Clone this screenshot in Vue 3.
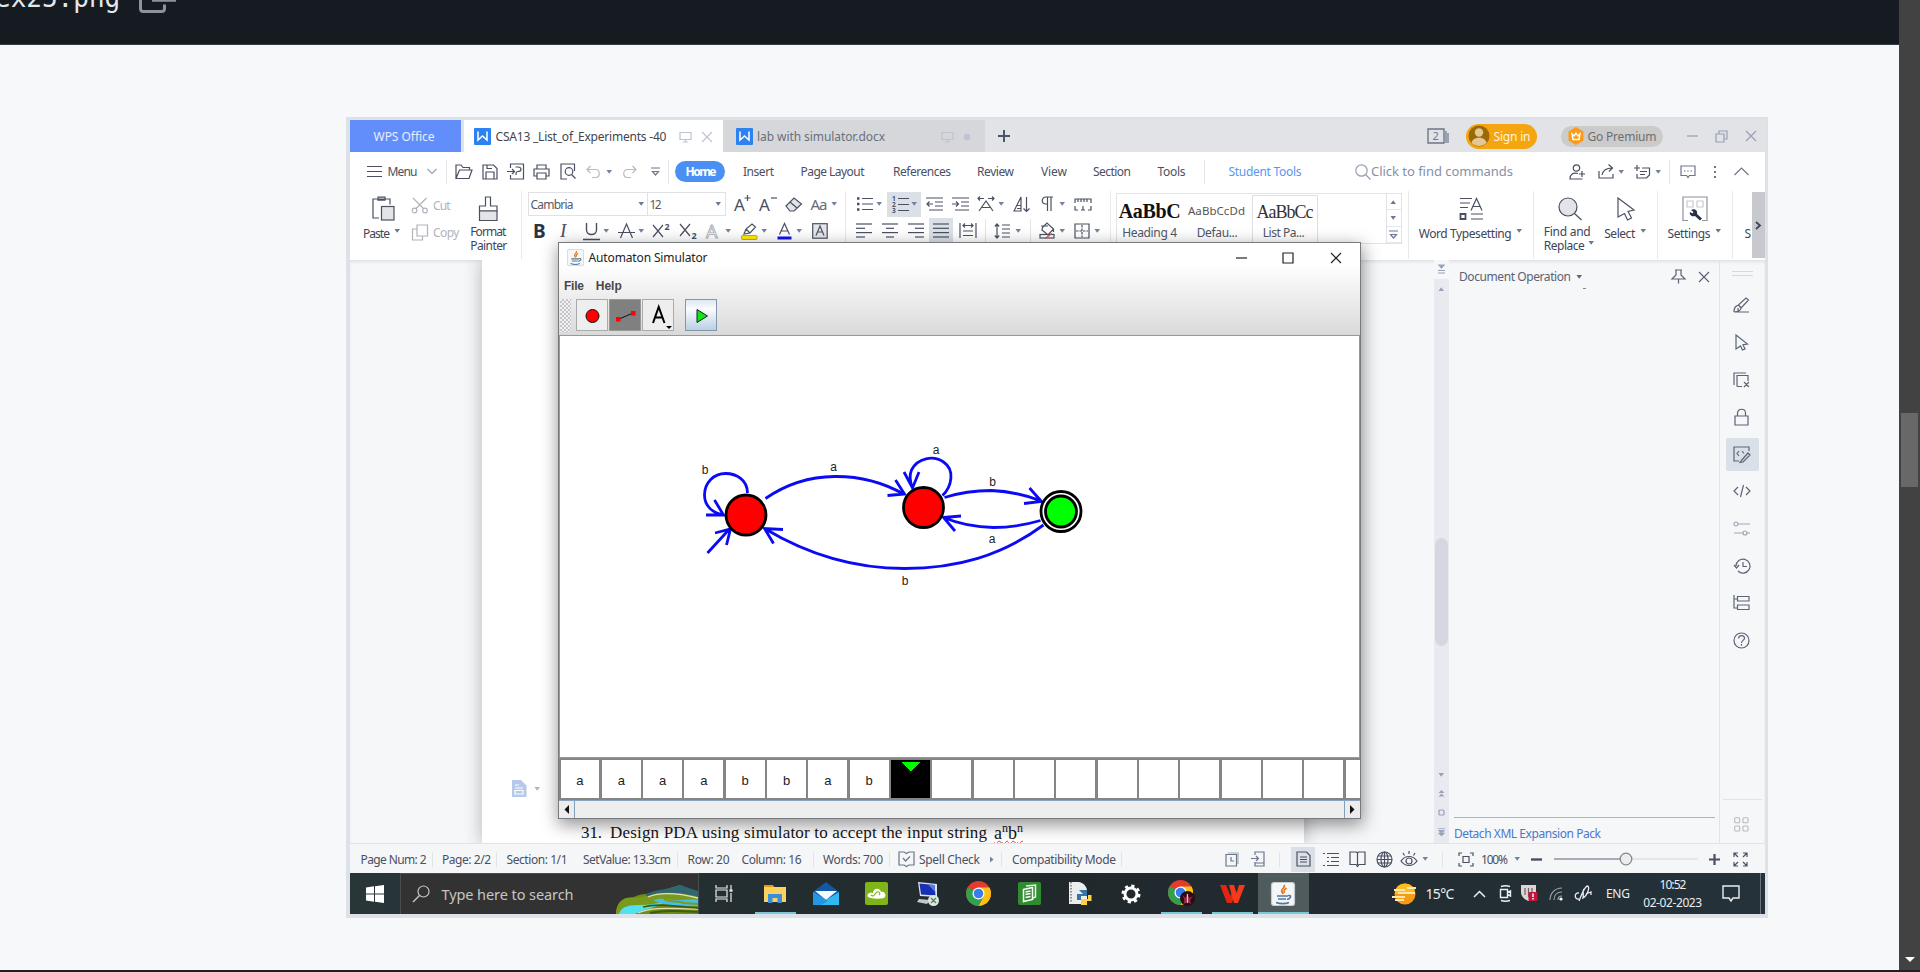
<script setup>
import { h, withDirectives } from 'vue'

// Adjusts letter spacing so that a label fills the given width.
const vFit = {
  mounted(el, { value }) {
    if (!value) return
    const range = document.createRange()
    range.selectNodeContents(el)
    const n = el.textContent.length
    const natural = range.getBoundingClientRect().width
    if (n > 1) el.style.letterSpacing = (value - natural) / (n - 1) + 'px'
  },
}

const bar = (x1, x2, y) => `<path d="M${x1} ${y}H${x2}"/>`
const java = '<rect x=".5" y=".5" width="23" height="23" rx="2.5" fill="#f4f6f7" stroke="#c3ccd1"/><g fill="none" stroke="#e5761f" stroke-width="1.7"><path d="M13 3c2 3-4 4-2 7l1 2M15.500 6c-3 2-3 3-2 5"/></g><g fill="none" stroke="#51799b" stroke-width="1.600"><path d="M6 14h11M7 17h8M5 20.500c4 1.500 10 1.500 13 0M17 13.500c4-.5 3 3-1 4"/></g>'
const chrome = '<circle cx="12.500" cy="12.500" r="12.500" fill="#e33b2e" stroke="none"/><path d="M12.500 12.500L1.700 6.300A12.500 12.500 0 0 0 12.500 25L18 15z" fill="#30a14e" stroke="none"/><path d="M12.500 25A12.500 12.500 0 0 0 23.500 6.500H12.500L18 15z" fill="#fbc116" stroke="none"/><circle cx="12.500" cy="12.500" r="6" fill="#fff" stroke="none"/><circle cx="12.500" cy="12.500" r="4.800" fill="#3b7ded" stroke="none"/>'
const wlogo = '<rect width="17" height="17" rx="1" fill="#2c82f0" stroke="none"/><path d="M4 3.500v8.500L8.500 8l4.500 4V3.500" stroke="#fff" stroke-width="1.500"/>'

const icons = {
  wlogo: [17, 17, wlogo],
  monitor: [13, 12, '<path d="M1 1.500h11v7H1zM6.500 8.500v2.500M4 11h5"/>'],
  x: [12, 12, '<path d="M1 1l10 10M11 1L1 11"/>'],
  dot: [8, 8, '<circle cx="4" cy="4" r="3.200" fill="currentColor" stroke="none"/>'],
  plusBig: [14, 14, '<path d="M7 1v12M1 7h12" stroke-width="2"/>'],
  count: [22, 17, '<path d="M1 1h16v14H1z" stroke-width="1.400"/><path d="M19 3v12M21 5v10"/><text x="5.500" y="12" font-size="11">2</text>'],
  avatar: [22, 22, '<circle cx="11" cy="11" r="10.500" fill="#9c6a05" stroke="none"/><circle cx="11" cy="7.500" r="4.200" fill="#e4c795" stroke="none"/><path d="M3.500 18c1-7 14-7 15 0-4 4-11 4-15 0z" fill="#e4c795" stroke="none"/>'],
  crown: [16, 18, '<path d="M8 0l7.500 4.500v9L8 18 .5 13.500v-9z" fill="#fb9b16" stroke="none"/><path d="M4 7l1 5.500h6L12 7 9.800 9 8 6 6.200 9z" stroke="#fff" stroke-width="1.400"/>'],
  min: [11, 12, bar(0, 11, 6)],
  restore: [13, 13, '<path d="M1 4h8v8H1zM4 4V1h8v8H9"/>'],
  square: [12, 12, '<path d="M1 1h10v10H1z"/>'],
  burger: [15, 13, '<path d="M0 1.500h15M0 6.500h15M0 11.500h15"/>'],
  chev: [10, 7, '<path d="M.5 1l4.500 4.500L9.500 1"/>'],
  chevUp: [15, 9, '<path d="M.5 8l7-7 7 7"/>'],
  chevR: [6, 9, '<path d="M1 1l4 3.500-4 3.500" stroke-width="1.800"/>'],
  open: [18, 16, '<path d="M1 14.500V1h5l2 2.500h6.500V6M1 14.500L4.500 6H17l-3 8.500z"/>'],
  save: [16, 16, '<path d="M1 1h10.500L15 4.500V15H1zM4 15V8h8v7M5 1v3.500h5"/>'],
  export: [18, 17, '<path d="M3.500 5V1H16.500v15H3.500v-4M0 8.500h7M5 6l2.500 2.500L5 11M9 12c0-3 0-3 2-3.500 4 0 4-4.500 0-4.500H8.500"/>'],
  print: [17, 16, '<path d="M4 5V1h9v4M4 12H1V5h15v7h-3M4 9h9v6H4z"/>'],
  preview: [16, 17, '<path d="M7 16H1V1h13.500v7"/><circle cx="9" cy="8.500" r="3.800"/><path d="M11.500 11.500l4 4"/>'],
  undo: [15, 14, '<path d="M4.500 1L1 4.500 4.500 8M1 4.500h8.500c5 0 5 8 0 8H6"/>'],
  redo: [15, 14, '<path d="M10.500 1L14 4.500 10.500 8M14 4.500H5.500c-5 0-5 8 0 8H9"/>'],
  more: [9, 9, '<path d="M0 1h9M1.500 4.500h6L4.500 8z"/>'],
  caret: [7, 4, '<path d="M.5 0h5.500L3.200 3.800z" fill="currentColor" stroke="none"/>'],
  caretU: [7, 4, '<path d="M.5 4h5.500L3.200 .2z" fill="currentColor" stroke="none"/>'],
  caretR: [4, 7, '<path d="M0 .5v6l3.500-3z" fill="currentColor" stroke="none"/>'],
  scrollR: [5, 9, '<path d="M0 0v9l4.500-4.500z" fill="currentColor" stroke="none"/>'],
  search: [16, 16, '<circle cx="6.500" cy="6.500" r="5.700"/><path d="M10.500 10.500l5 5"/>'],
  user: [16, 16, '<circle cx="7.500" cy="4" r="3.200"/><path d="M9 9.500c-5-1.500-8 1-8 5.500h12.500M13 7v6M10 10h6"/>'],
  share: [17, 15, '<path d="M1 7v7h14v-4M4 11c1-5 4-7 10-7M10.500 .5L14.500 4 11 7.500"/>'],
  note: [17, 14, '<path d="M3 0v6M0 3h6M8 3h7.500v7l-3 3H3V9M6 6.500h7M6 9.500h5"/>'],
  chat: [16, 14, '<path d="M1 1h14v9.500H9.500L8 12.500l-1.500-2H1z"/><path d="M4 6h1.500M7.200 6h1.500M10.500 6H12"/>'],
  dots: [4, 14, '<path d="M2 1v2M2 6v2M2 11v2" stroke-width="2"/>'],
  paste: [23, 25, '<path d="M7 21.500H1V2.500h17V8M6 .7h7v3H6z"/><rect x="9.500" y="10" width="12.500" height="13.500" fill="#e3e4e7"/>'],
  cut: [18, 17, '<circle cx="3.500" cy="13.500" r="2.300"/><circle cx="14" cy="13.500" r="2.300"/><path d="M2 1l10.500 10.500M15.500 1L5 11.500"/>'],
  copy: [17, 17, '<path d="M5.500 1h10.500v11H5.500zM5.500 5H1v11h10v-4"/>'],
  brush: [21, 26, '<path d="M7.500 10V1h5v9h6.500v5H1.500v-5z"/><path d="M1.500 15h17.500v9.500H1.500z" fill="#e3e4e7"/>'],
  Ap: [18, 18, '<text x="0" y="16" font-size="17">A</text><path d="M13.500 0v6M10.500 3h6"/>'],
  Am: [18, 18, '<text x="0" y="16" font-size="17">A</text><path d="M12 3h6"/>'],
  eraser: [18, 15, '<path d="M1 9l8-8 7.500 6-7.500 7H5z" fill="#e3e4e7"/><path d="M5 5l7 6"/>'],
  bullets: [17, 16, '<path d="M6 2.500h11M6 8h11M6 13.500h11"/><path d="M1 2.500h2.500M1 8h2.500M1 13.500h2.500" stroke-width="2.500"/>'],
  numbers: [17, 17, '<path d="M6 2.500h11M6 8.500h11M6 14.500h11"/><g font-size="6.500" font-weight="700"><text x="0" y="5">1</text><text x="0" y="11">2</text><text x="0" y="17">3</text></g>'],
  outdent: [17, 14, '<path d="M0 1h17M9 5h8M9 9h8M3 13h14M7 7H1M3.500 4.500L1 7l2.500 2.500"/>'],
  indent: [17, 14, '<path d="M0 1h17M9 5h8M9 9h8M3 13h14M0 7h6M4 4.500L6.500 7 4 9.500"/>'],
  scaleA: [18, 16, '<path d="M1 2.500h6M3 .5l-2 2 2 2M11 2.500h6M15 .5l2 2-2 2M2 15L9 5l7 10M5 11.500h8"/>'],
  sort: [17, 17, '<path d="M1 15L8 1v14zM4 9.500h4M4 12.500h4M13.500 1v14M10.500 12.500l3 3 3-3"/>'],
  pilcrow: [13, 16, '<path d="M12 1H5C0 1 0 8 5 8h1M6.500 1v14M10 1v14"/>'],
  ruler: [18, 13, '<path d="M1 5V1h16v4M4 1v3M7 1v3M10 1v3M13 1v3M1 8v4h3M14 12h3V8M9 8v4M7 12h4"/>'],
  under: [17, 19, '<path d="M3.500 1v7c0 6 10 6 10 0V1M0 17.500h17" stroke-width="1.400"/>'],
  strikeA: [17, 17, '<path d="M2.500 15L8.500 1l6 14M0 9.500h17" stroke-width="1.200"/>'],
  sup: [19, 16, '<path d="M1 2l10 12M11 2L1 14"/><text x="12.500" y="7" font-size="9" font-weight="700">2</text>'],
  sub: [19, 17, '<path d="M1 1l10 12M11 1L1 13"/><text x="12.500" y="16" font-size="9" font-weight="700">2</text>'],
  outA: [15, 16, '<text class="hollow" x="0" y="15" font-size="18">A</text>'],
  hilite: [17, 17, '<rect x=".5" y="12.500" width="15.500" height="4" rx="1" fill="#ffee00" stroke="#9a9620" stroke-width=".7"/><path d="M3 11l2-5 6-5 3.500 3L9 10zM5 6l4 4"/>'],
  colorA: [15, 17, '<path d="M2.500 11.500L7.500 .5l5 11M4.200 8h6.500"/><path d="M.5 15h14" stroke="#1212f0" stroke-width="3"/>'],
  boxA: [16, 16, '<rect x=".7" y=".7" width="14.500" height="14.500" fill="#e4e6e9"/><path d="M4 12.500l4-9.500 4 9.500M5.500 9h5"/>'],
  alL: [16, 15, bar(0, 16, 1) + bar(0, 9, 5.300) + bar(0, 16, 9.600) + bar(0, 9, 14)],
  alC: [16, 15, bar(0, 16, 1) + bar(4, 12, 5.300) + bar(0, 16, 9.600) + bar(4, 12, 14)],
  alR: [16, 15, bar(0, 16, 1) + bar(7, 16, 5.300) + bar(0, 16, 9.600) + bar(7, 16, 14)],
  alJ: [16, 15, bar(0, 16, 1) + bar(0, 16, 5.300) + bar(0, 16, 9.600) + bar(0, 16, 14)],
  distrib: [18, 15, '<path d="M1 0v15M17 0v15M4 2.500h10M6 .5l-2 2 2 2M12 .5l2 2-2 2M4 8h10M4 12.500h10"/>'],
  spacing: [16, 16, '<path d="M3 1v14M.8 3.500L3 1l2.200 2.500M.8 12.500L3 15l2.200-2.500M8 2h8M8 6h8M8 10h8M8 14h8"/>'],
  fill: [17, 17, '<path d="M3.500 5.500L8 1l6.500 6-5.500 6-6-5zM2 4h7M14.500 7v3"/><rect x="1" y="12.500" width="14" height="3.500"/><path d="M6 16.500l7-5" stroke="#e25050"/>'],
  border: [16, 16, '<path d="M1 1h14v14H1z"/><path d="M8 2v12M2 8h12" stroke-dasharray="2.500 1"/>'],
  typeset: [25, 23, '<path d="M1 1h12M1 5.500h10M1 10h8M12 21.500h12M12 16.500h12M12 13l5.500-12L23 13M14 9h7" /><path d="M1.500 16.500h5v5h-5z" stroke-width="1.800"/>'],
  find: [24, 24, '<circle cx="10" cy="10" r="9" fill="#e3e4e7"/><path d="M16.500 16.500l7 6.500"/>'],
  pointer: [18, 24, '<path d="M1 1l16 12-6 1.500 3.500 6.500-4 2-3-6.500L1 20z"/>'],
  settings: [26, 26, '<path d="M6 24.500H1V1h24v23.500h-5" stroke="#8e9299"/><path d="M5 5h6v6H5zM15 5h6v6h-6z" stroke="#c7c9cd"/><path d="M9 14c4-2 7 1 6 4l5 4.500-2 2-5-4.500c-3 1-6-1-5-4l2.500 1.500 1-1.500z" fill="#263145" stroke="none"/>'],
  pin: [15, 15, '<path d="M4 1h7M5 1v5L1 10h13l-4-4V1M7.500 10v4.500"/>'],
  pen: [17, 16, '<path d="M1 15h15M1 15c0-5 2-6 4.500-7L13 1l2.500 2L8 11c0 2-3 4-7 4M5.500 8L8 11M5 11v3"/>'],
  cursor: [14, 17, '<path d="M1 1l11.500 9-4.500.7 2 4.300-2.500 1-2-4-4.500 3z"/>'],
  cards: [17, 16, '<path d="M1 13V1h12M4 14.500V3.500h11V9M4 14.500h5M11 10l5 5M16 10l-5 5"/>'],
  lock: [15, 18, '<path d="M1 8h13v9H1zM3.500 8V5c0-5 8-5 8 0v3"/>'],
  xmlpen: [18, 17, '<path d="M6 15H1V1h15v4M6 5L4 7.500 6 10M9 5l2 2.500M8 15l7-8 2 2-7 7-3 .5z"/>'],
  code: [18, 14, '<path d="M5 3L1 7l4 4M13 3l4 4-4 4M10.500 1l-3 12"/>'],
  sliders: [18, 16, '<circle cx="3" cy="3" r="2"/><path d="M5 3h12M1 12h9M14 12h3"/><circle cx="12" cy="12" r="2"/>'],
  history: [18, 16, '<path d="M3 8a7 7 0 1 1 2 5M1 7l2.500 3L6 7M10 4v4.500h4"/>'],
  tree: [17, 16, '<path d="M1 0v13h3M1 4h3M4.500 1.500H16v4.500H4.500zM4.500 10H16v4.500H4.500z"/>'],
  help: [17, 17, '<circle cx="8.500" cy="8.500" r="7.500"/><path d="M5.500 6.500c.5-4 6.500-3.500 6 0C11 8.500 8.500 8.500 8.500 11M8.500 12v1.700"/>'],
  squares: [15, 15, '<g stroke-width="1.100"><rect x=".7" y=".7" width="5" height="5" rx="1"/><rect x="9" y=".7" width="5" height="5" rx="1"/><rect x=".7" y="9" width="5" height="5" rx="1"/><rect x="9" y="9" width="5" height="5" rx="1"/></g>'],
  tiny2u: [7, 8, '<path d="M.5 4h6L3.500 1zM.5 7.500h6l-3-3z" fill="currentColor" stroke="none"/>'],
  tiny2d: [7, 8, '<path d="M0 .7h7M.5 2.500h6l-3 2.500zM.5 5h6l-3 3z" fill="currentColor" stroke-width=".8"/>'],
  tinySq: [7, 7, '<rect x="1" y="1" width="5" height="5" rx="1"/>'],
  splitter: [9, 9, '<path d="M2 0h5L4.500 3zM1 5.500h7M1 8h7" fill="currentColor"/>'],
  docTag: [15, 17, '<path d="M0 0h9l5.500 5.500V17H0z" fill="#b7c9e8" stroke="none"/><path d="M3 5h4M3 8h8M3 10.500h8v3.500H3z" stroke="#fff"/>'],
  spell: [17, 16, '<path d="M1 1h5l2.500 1.500L11 1h5v13h-5l-2.500 1.500L6 14H1z"/><path d="M5 7l2.500 3L12 5.500"/>'],
  clock: [14, 15, '<path d="M3 1h10v11" stroke="#a7abb5"/><path d="M1 2.500h10.500v11.500H1z"/><path d="M6 5v4h3"/>'],
  phone: [14, 16, '<path d="M4 4V1h9v14H4v-4M0 7.500h7M5 5l2.500 2.500L5 10M4 12h9"/>'],
  doc: [15, 16, '<path d="M1 1h9.500L14 4.500V15H1zM4 6h7M4 8.500h7M4 11h7"/>'],
  outline: [16, 15, '<path d="M0 1.500h2M4 1.500h12M4 5.500h2M8 5.500h8M4 9.500h2M8 9.500h8M0 13.500h2M4 13.500h12"/>'],
  book: [17, 16, '<path d="M1 1h6.500l1 1 1-1H16v12.500H10l-1.500 2-1.500-2H1zM8.500 2v12"/>'],
  globe: [17, 17, '<circle cx="8.500" cy="8.500" r="7.500"/><ellipse cx="8.500" cy="8.500" rx="3.500" ry="7.500"/><path d="M8.500 1v15M1 8.500h15M2 5h13M2 12h13"/>'],
  eye: [18, 16, '<path d="M1 10c4-6 12-6 16 0-4 6-12 6-16 0zM9 0v3M3 2l1.500 2.500M15 2l-1.500 2.500"/><circle cx="9" cy="10" r="3"/>'],
  fit: [16, 15, '<path d="M1 4V1h3M12 1h3v3M15 11v3h-3M4 14H1v-3M5 4.500h6v6H5z"/>'],
  minus: [11, 3, '<path d="M0 1.500h11" stroke-width="2.400"/>'],
  plus: [11, 11, '<path d="M0 5.500h11M5.500 0v11" stroke-width="2.200"/>'],
  full: [15, 15, '<path d="M1 5V1h4M1 1l4 4M10 1h4v4M14 1l-4 4M1 10v4h4M1 14l4-4M14 10v4h-4M14 14l-4-4"/>'],
  slider: [144, 14, '<path d="M72 7h72" stroke="#d3d6dc"/><path d="M0 7h72" stroke="#8d95a3" stroke-width="1.500"/><circle cx="72" cy="7" r="5.800" fill="#ededee" stroke="#888" stroke-width="1.300"/>'],
  win: [18, 18, '<path d="M0 2.500L8 1.300v7.200H0zM9 1.200L18 0v8.500H9zM0 9.500h8v7.200L0 15.500zM9 9.500h9V18L9 16.800z" fill="#fff" stroke="none"/>'],
  lens: [18, 18, '<circle cx="11.500" cy="6.500" r="5.500"/><path d="M7.500 10.500L1 17" stroke-width="1.500"/>'],
  art: [82, 30, '<path d="M0 30C1 15 12 14 18 13 27 8 38 11 44 7L64 1l18 8v21z" fill="#6d8c14" stroke="none"/><path d="M30 10C40 5 52 6 64 1l18 6v6c-16-6-34-4-52 0z" fill="#2f6672" stroke="none"/><path d="M0 30c0-12 8-18 18-16l14-2c14-5 34-4 50 2v8c-20-6-34-3-46 0-14 3-26 4-30 8z" fill="#7b991b" stroke="none"/><path d="M3 30c3-9 12-9 22-9 8 0 16-2 22-2-6 5-18 5-28 11z" fill="#4fe3f2" stroke="none"/><path d="M38 16c8-3 14 0 24 0 6 0 14-1 20 0v6c-14 1-26 0-38-3-4-1-6-2-6-3z" fill="#46bfe4" stroke="none"/><path d="M48 15c6 4 14 1 20 4l14 1" stroke="#7b991b" stroke-width="2"/><path d="M32 13c12-5 30-4 50 1M22 29c16-7 36-4 60-4" stroke="#e2e0b0" stroke-width="1.300"/><path d="M27 23c14-4 30-1 55 1M34 29c16-3 30-2 48-1" stroke="#3f5c0d" stroke-width="1.800"/>'],
  taskview: [18, 17, '<path d="M1 0v3h11V0M1 5h11v7H1zM1 17v-3h11v3M16 0v4M16 8v9" /><path d="M14.500 5.500h3" stroke-width="2.500"/>'],
  folder: [24, 20, '<path d="M1 1h9l2 3H1z" fill="#e09a13" stroke="none"/><path d="M1 3h22v15H1z" fill="#fbd25f" stroke="none"/><path d="M5 10h14v9h-4.500v-5h-5v5H5z" fill="#3b8ddd" stroke="none"/>'],
  mail: [26, 24, '<path d="M0 10L13 0l13 10v13H0z" fill="#1259a5" stroke="none"/><path d="M2 9h22L13 18z" fill="#f2f8fc" stroke="none"/><path d="M0 10l13 8 13-8v13H0z" fill="#32b7ef" stroke="none"/><path d="M0 10l15 9-7 4H0z" fill="#2397df" stroke="none"/>'],
  cloud: [23, 23, '<rect width="23" height="23" rx="2" fill="#80b51a" stroke="none"/><path d="M3 15c-2-4 3-5 5-4 0-5 7-6 8-1 4-1 6 4 3 6-5 1-12 1-16-1z" fill="#fff" stroke="none"/><path d="M6 13c3 3 4-2 6-3s4 2 2 3" stroke="#80b51a"/>'],
  remote: [24, 24, '<path d="M2 0l19 2v13L4 14z" fill="#dfe3ec" stroke="none"/><path d="M3.500 1.500l15 1.500 1 10.500L5 12.500z" fill="#1830b5" stroke="none"/><path d="M12 2.500l6.500.6.700 7z" fill="#5d7be0" stroke="none"/><path d="M3 17l11 1-3 4-10-2z" fill="#c3c7ce" stroke="none"/><circle cx="17.500" cy="18.500" r="5.500" fill="#dfe5e0" stroke="none"/><path d="M15 16l2.500 2.500L15 21M20 16l-2.500 2.500L20 21" stroke="#3d8f52"/>'],
  chrome: [25, 25, chrome],
  green: [23, 23, '<rect width="23" height="23" rx="2" fill="#318c31" stroke="none"/><path d="M8 4l9.500-1v12l-2.500 1" stroke="#e5f4e5" stroke-width="1.500"/><path d="M5.500 7.500l9-2v12l-9 2zM7.500 10l5-1M7.500 12.500l5-1M7.500 15.500l5-1" stroke="#fff" stroke-width="1.500"/>'],
  python: [24, 25, '<path d="M1 1h10c5 1 8 5 8 9v13H1z" fill="#eceded" stroke="none"/><path d="M3 1v21" stroke="#555" stroke-dasharray="1.500 1.500"/><path d="M11 9h8v6h-6v4H9v-6h6z" fill="#3775a9" stroke="none"/><path d="M20 14h3.500v6H19v4h-6v-6h7z" fill="#fbd344" stroke="none"/>'],
  gear: [20, 20, '<circle cx="10" cy="10" r="6" stroke="#fff" stroke-width="3"/><circle cx="10" cy="10" r="8.200" stroke="#fff" stroke-width="2.600" stroke-dasharray="3.200 3.240"/>'],
  chrome2: [28, 27, chrome + '<circle cx="19.500" cy="18.500" r="7.500" fill="#2a0c16" stroke="none"/><path d="M14.500 15l3 3 2-5 1.500 5 4-2-3 4 1 4-3.500-2-4 2 1-4z" fill="#9c2b49" stroke="none"/><path d="M19.500 14v9" stroke="#efb9c5"/>'],
  wps: [25, 20, '<path d="M0 1h6l4.500 11L12 8l2 5-2 6H7z" fill="#e42410" stroke="none"/><path d="M9 1h5l2.500 8L19 1h6l-7 18h-4z" fill="#f53a1c" stroke="none"/>'],
  java: [24, 24, java],
  weather: [26, 22, '<circle cx="14" cy="11" r="10.500" fill="#f79b17" stroke="none"/><path d="M4.500 6.500a10.500 10.500 0 0 1 19 0L22 11H4z" fill="#fbbd25" stroke="none"/><path d="M3 7h11M16 5h9M7 10h17M1 14h13M4 17h9" stroke="#fde6a9" stroke-width="1.800"/>'],
  up: [13, 8, '<path d="M1 7l5.500-5.500L12 7" stroke-width="1.500"/>'],
  meet: [13, 17, '<path d="M2 1.500c3-1 6-1 9 0M2 15.500c3 1 6 1 9 0M1.500 4.500h7v8h-7zM8.500 7.500l3-1.500v5l-3-1.500" stroke-width="1.400"/>'],
  shield: [17, 17, '<path d="M0 0h15v7c0 5-4 8-7.500 9C4 15 0 12 0 7z" fill="#d9d6d8" stroke="none"/><path d="M4 3v7M7.500 3v9M11 3v6" stroke="#7b5963"/><rect x="7.500" y="7" width="9" height="9" rx="1" fill="#c4133c" stroke="none"/><path d="M12 8.500v3.500M12 13v1.500" stroke="#fff" stroke-width="1.500"/>'],
  wifi: [14, 14, '<path d="M1 13C1 6 6 1 13 1M5 13c0-5 3-8 8-8M9 13c0-3 1-4 4-4" stroke="#9da5a7"/><circle cx="12" cy="12" r="1.600" fill="#fff" stroke="none"/>'],
  ink: [18, 17, '<path d="M5 8c-5-1-5 7 0 6M5 16C7 12 9 4 13 1c4 0 0 10-4 12 1-4-1-7 1-9M12 9l5-2v3" stroke-width="1.300"/>'],
  notif: [18, 17, '<path d="M1 1h16v12h-6l-2 3-2-3H1z" stroke-width="1.400"/>'],
}

const Ic = ({ n }) => {
  const [w, ht, body] = icons[n]
  return h('svg', { class: 'ic', width: w, height: ht, viewBox: `0 0 ${w} ${ht}`, innerHTML: body })
}
Ic.props = ['n']

const label = (text, w, cls) => withDirectives(h('span', { class: ['lb', cls] }, text), [[vFit, w]])

// Item forms: [x,'i',icon,class] [x,'t',text,width,class] [x,'s'] [x,'p',icon,text,width,class]
const cell = (it) => {
  if (it[1] === 'i') return h('span', { class: ['cell', it[3]] }, [h(Ic, { n: it[2] })])
  if (it[1] === 't') return h('span', { class: ['cell', it[4]] }, [label(it[2], it[3])])
  if (it[1] === 'p') return h('span', { class: ['cell', it[5]] }, [h(Ic, { n: it[2] }), label(it[3], it[4])])
  return h('span', { class: 'sep' })
}
const Row = ({ items, origin }) => {
  const o = origin ?? 350
  const cols = items.map((it, i) => (i + 1 < items.length ? items[i + 1][0] - it[0] + 'px' : 'auto'))
  return h('div', { class: 'row', style: { paddingLeft: items[0][0] - o + 'px', gridTemplateColumns: cols.join(' ') } }, items.map(cell))
}
Row.props = ['items', 'origin']

const c = (x) => [x - 3, 'i', 'caret', 'mut']
const i = (x, n, k) => [x, 'i', n, k]
const t = (x, s, w, k) => [x, 't', s, w, k]
const s = (x) => [x, 's']

const tabRight = [
  i(1427, 'count', 'slate'), s(1457), [1466, 'p', 'avatar', 'Sign in', 37, 'signin'], s(1546),
  [1560.5, 'p', 'crown', 'Go Premium', 69, 'premium'], s(1674), i(1687, 'min', 'faint'), i(1714.5, 'restore', 'faint'), i(1745, 'x', 'faint'),
]
const menu = [
  i(367, 'burger'), t(387.5, 'Menu', 30), i(427, 'chev', 'faint'), s(446), i(455, 'open'), i(482, 'save'), i(507, 'export'), i(533, 'print'),
  i(560, 'preview'), i(586, 'undo', 'off'), c(608.5), i(622, 'redo', 'off'), i(651, 'more', 'slate'), s(668), t(675, 'Home', 31, 'home'),
  t(743, 'Insert', 31), t(800.5, 'Page Layout', 64), t(893, 'References', 58), t(977, 'Review', 37), t(1041, 'View', 26), t(1093, 'Section', 38),
  t(1157.5, 'Tools', 28), s(1204), t(1228.5, 'Student Tools', 73, 'blue'), i(1354.5, 'search', 'faint'), t(1371, 'Click to find commands', 142, 'find'),
  i(1569, 'user'), i(1598, 'share'), c(1621), i(1634, 'note'), c(1657.5), s(1669), i(1680, 'chat', 'slate'), i(1713, 'dots', 'slate'), i(1734, 'chevUp', 'slate'),
]
const font2 = [
  t(533, 'B', 0, 'bold'), t(560, 'I', 0, 'ital'), i(583, 'under'), c(606), i(618, 'strikeA'), c(641), i(652, 'sup'), i(679, 'sub'),
  i(706, 'outA'), c(728), i(741, 'hilite'), c(763.5), i(777, 'colorA'), c(799), i(812, 'boxA'),
]
const fontTools = [i(733, 'Ap'), i(758, 'Am'), i(784, 'eraser'), t(810, 'Aa', 17, 'aa'), c(833)]
const para1 = [
  i(856, 'bullets'), c(878.5), [886.5, 'i', 'numbers', 'on num'], c(913.5), i(926, 'outdent'), i(952, 'indent'), i(977, 'scaleA'), c(1001), i(1013, 'sort'),
  i(1041, 'pilcrow'), c(1062), i(1073.5, 'ruler'),
]
const para2 = [
  i(856, 'alL'), i(882, 'alC'), i(908, 'alR'), i(929, 'alJ', 'on'), i(958.5, 'distrib'), s(985), i(994, 'spacing'), c(1017.5), s(1030),
  i(1039, 'fill'), c(1062), i(1074, 'border'), c(1097),
]
const status = [
  t(360.5, 'Page Num: 2', 66), s(432), t(442, 'Page: 2/2', 49), s(496), t(506.5, 'Section: 1/1', 61), t(583, 'SetValue: 13.3cm', 88), s(677),
  t(687.5, 'Row: 20', 42), t(741.5, 'Column: 16', 60), s(813), t(823, 'Words: 700', 60), s(889), i(898, 'spell', 'slate'), t(919, 'Spell Check', 61),
  i(990, 'caretR', 'mut'), s(1001), t(1012, 'Compatibility Mode', 104), s(1121), i(1225, 'clock', 'slate'), i(1251, 'phone', 'slate'), s(1279), i(1291, 'doc', 'on view'),
  i(1323, 'outline'), i(1349, 'book'), i(1376, 'globe'), i(1400, 'eye'), c(1424.5), s(1442), i(1457.5, 'fit'), t(1481, '100%', 27), c(1516.5),
  i(1531, 'minus'), i(1554, 'slider'), i(1709, 'plus'), i(1733, 'full'),
]
const tray = [
  i(1391, 'weather'), t(1425.5, '15°C', 29, 'temp'), i(1473.5, 'up'), i(1499, 'meet'), i(1521, 'shield'), i(1549, 'wifi'), i(1574.5, 'ink'), t(1606, 'ENG', 24),
]
const apps = [
  ['taskview'], ['folder', 'run'], ['mail'], ['cloud'], ['remote'], ['chrome'], ['green'], ['python'], ['gear'], ['chrome2', 'run'], ['wps', 'run'], ['java', 'active'],
]
const side = ['pen', 'cursor', 'cards', 'lock', 'xmlpen', 'code', 'sliders', 'history', 'tree', 'help']
const tape = ['a', 'a', 'a', 'a', 'b', 'b', 'a', 'b', '#', '', '', '', '', '', '', '', '', '', '', '']
const edges = [
  'M746 493C746 480 735 473.500 724 473.500C712 473.500 703 483 703 495C703 506 711 513 722 515M713 500L722 515H704.500',
  'M764 498.500Q795 477 833 476.500Q870 476 902 494M894 480L903 494L886 495.500',
  'M941 495.500C950 487 954 470 942 462C932 455 916 458 910 470C907 477 909 483 911 488M902.500 472L911 488L917.500 472',
  'M943 497.500Q965 490.500 990 490.500Q1015 491.500 1040 501M1028 488L1040 501.500L1022.500 503.500',
  'M1039 520.500Q1015 527.500 992 527.500Q965 527 942 517.500M959.500 516L942 517.500L953.500 531',
  'M1042 525C1000 556 955 568.500 903 568.500C860 568.500 812 558 763 528.500M781.500 529.500L763 528.500L772 543.500',
  'M706 553L728 529M713.500 533L729 529L725 545',
]
const marks = [['b', 703.5, 474], ['a', 832, 471], ['a', 934.5, 453.5], ['b', 991, 485.5], ['a', 990.5, 543], ['b', 903.5, 584.5]]
</script>

<template>
  <div class="page">
    <div class="topbar">
      <span class="file">ex25.png</span>
      <svg class="copyico" width="40" height="16" viewBox="0 0 40 16"><path d="M2.500 0v8.500q0 3 3 3h18q3 0 3-3V4.500M14 .2h24" /></svg>
    </div>
    <div class="shot">
      <div class="office">
        <div class="tabs">
          <div class="wps"><span v-fit="61">WPS Office</span></div>
          <div class="tab current">
            <Ic n="wlogo" /><span v-fit="171">CSA13 _List_of_Experiments -40</span><Ic n="monitor" class="mon" /><Ic n="x" />
          </div>
          <div class="tab other">
            <Ic n="wlogo" /><span v-fit="128">lab with simulator.docx</span><Ic n="monitor" class="mon" /><Ic n="dot" />
          </div>
          <div class="add"><Ic n="plusBig" /></div>
          <Row :items="tabRight" :origin="1023" />
        </div>
        <div class="menubar"><Row :items="menu" /></div>
        <div class="ribbon">
          <div class="group clip">
            <div class="big paste"><Ic n="paste" /><div class="cap"><span v-fit="27">Paste</span><Ic n="caret" /></div></div>
            <div class="cc">
              <div><Ic n="cut" /><span v-fit="17.5">Cut</span></div>
              <div><Ic n="copy" /><span v-fit="26.5">Copy</span></div>
            </div>
            <div class="big format"><Ic n="brush" /><div class="cap two"><span v-fit="36">Format</span><span v-fit="37">Painter</span></div></div>
          </div>
          <div class="group fonts">
            <div class="line">
              <div class="combo family"><span v-fit="43">Cambria</span><Ic n="caret" /></div>
              <div class="combo size"><span v-fit="12">12</span><Ic n="caret" /></div>
              <Row :items="fontTools" :origin="725" />
            </div>
            <div class="line"><Row :items="font2" :origin="522" /></div>
          </div>
          <div class="group para">
            <div class="line"><Row :items="para1" :origin="846" /></div>
            <div class="line"><Row :items="para2" :origin="846" /></div>
          </div>
          <div class="group styles">
            <div class="gallery">
              <div class="style h4"><b v-fit="62">AaBbC</b><span v-fit="55">Heading 4</span></div>
              <div class="style"><i v-fit="57">AaBbCcDd</i><span v-fit="41">Defau...</span></div>
              <div class="style picked"><em v-fit="57">AaBbCc</em><span v-fit="42">List Pa...</span></div>
              <div class="spin"><span><Ic n="caretU" /></span><span><Ic n="caret" /></span><span><Ic n="more" /></span></div>
            </div>
          </div>
          <div class="group typeset big"><Ic n="typeset" /><div class="cap"><span v-fit="93">Word Typesetting</span><Ic n="caret" /></div></div>
          <div class="group edit">
            <div class="big findrep"><Ic n="find" /><div class="cap two"><span v-fit="47">Find and</span><span><span v-fit="41">Replace</span><Ic n="caret" /></span></div></div>
            <div class="big select"><Ic n="pointer" /><div class="cap"><span v-fit="31">Select</span><Ic n="caret" /></div></div>
          </div>
          <div class="group set big"><Ic n="settings" /><div class="cap"><span v-fit="43">Settings</span><Ic n="caret" /></div></div>
          <div class="next"><span>S</span><div><Ic n="chevR" /></div></div>
        </div>
        <div class="work">
          <div class="canvas">
            <div class="sheet">
              <div class="tag"><Ic n="docTag" /><Ic n="caret" /></div>
              <svg class="tails" width="440" height="4" viewBox="0 0 440 4"><path d="M63 .5q4 2 8 0M167 0v2M205 2l3-2M412 0v2M428 2l3-2" /><path class="red" d="M289 .5l3 2 4-2 4 2 4-2 3 1" /></svg>
              <div class="para31"><span v-fit="21">31.</span><span v-fit="377">Design PDA using simulator to accept the input string</span><span class="wavy">a<sup>n</sup>b<sup>n</sup></span></div>
            </div>
          </div>
          <div class="vscroll">
            <div class="vtop"><Ic n="splitter" /></div>
            <Ic n="caretU" class="s1" /><div class="vthumb"></div><Ic n="caret" class="s2" /><Ic n="tiny2u" /><Ic n="tinySq" /><Ic n="tiny2d" />
          </div>
          <div class="pane">
            <div class="phead"><span v-fit="112">Document Operation</span><Ic n="caret" /><Ic n="pin" class="pin" /><Ic n="x" /></div>
            <div class="speck"></div>
            <div class="pfoot"><span v-fit="147">Detach XML Expansion Pack</span></div>
          </div>
          <div class="side">
            <div class="handle"></div>
            <div v-for="n in side" :key="n" class="tool" :class="n"><Ic :n="n" /></div>
            <div class="grid4"><Ic n="squares" /></div>
          </div>
        </div>
        <div class="status"><Row :items="status" /></div>
        <div class="taskbar">
          <div class="start"><Ic n="win" /></div>
          <div class="searchbox"><Ic n="lens" /><span v-fit="132">Type here to search</span><Ic n="art" class="art" /></div>
          <div v-for="a in apps" :key="a[0]" class="app" :class="a[1]"><Ic :n="a[0]" /></div>
          <Row :items="tray" :origin="1308.6" />
          <div class="clock"><span v-fit="27">10:52</span><span v-fit="59">02-02-2023</span></div>
          <div class="note"><Ic n="notif" /></div>
        </div>
      </div>
      <div class="sim">
        <div class="chromebar">
          <div class="title"><svg width="17" height="17" viewBox="0 0 24 24" v-html="icons.java[2]"></svg><span v-fit="119">Automaton Simulator</span><Ic n="min" class="m" /><Ic n="square" class="q" /><Ic n="x" class="k" /></div>
          <div class="simmenu"><span v-fit="20">File</span><span v-fit="26">Help</span></div>
          <div class="toolbar">
            <div class="grip"></div>
            <div class="btn"><svg width="30" height="30"><circle cx="15.500" cy="16" r="6.500" fill="#f00" stroke="#111" /></svg></div>
            <div class="btn down"><svg width="30" height="30"><path d="M8 19.500L23 13" stroke="#111" /><path d="M6 17h4.500v4.500H6zM21 11h4.500v4.500H21z" fill="#f00" /></svg></div>
            <div class="btn"><svg width="30" height="30"><path d="M10 23l5.700-16L21.500 23M12 17.500h7.500" fill="none" stroke="#000" stroke-width="2" /><path d="M23 26h6l-3 3z" /></svg></div>
            <div class="btn play"><svg width="30" height="30"><path d="M11 9.500v13L21.500 16z" fill="#0be80b" stroke="#123" /></svg></div>
          </div>
        </div>
        <svg class="graph" width="799" height="421" viewBox="558.500 336 799 421">
          <path v-for="e in edges" :key="e" :d="e" class="edge" />
          <circle cx="744.500" cy="515" r="20" class="node" /><circle cx="922" cy="507.500" r="20" class="node" />
          <circle cx="1059.500" cy="511.500" r="20" class="node ring" /><circle cx="1059.500" cy="511.500" r="15.500" class="node ok" />
          <text v-for="m in marks" :key="m[1]" :x="m[1]" :y="m[2]">{{ m[0] }}</text>
        </svg>
        <div class="tape"><div v-for="(v, k) in tape" :key="k" class="sq" :class="{ head: v === '#' }">{{ v === '#' ? '' : v }}</div></div>
        <div class="hscroll"><span><Ic n="scrollR" class="flip" /></span><div></div><span><Ic n="scrollR" /></span></div>
      </div>
    </div>
    <div class="scrollbar"><div class="thumb"></div><div class="arrow"></div></div>
    <div class="baseline"></div>
  </div>
</template>

<style>
body { margin: 0; overflow: hidden; }
.ic { display: block; flex: none; fill: none; stroke: currentColor; stroke-width: 1.2; overflow: visible; }
.ic text { fill: currentColor; stroke: none; font-family: "Noto Sans", sans-serif; }
.ic .hollow { fill: #fff; stroke: #adb1bb; stroke-width: .9; }
.row { display: grid; align-items: center; height: 100%; box-sizing: border-box; white-space: nowrap; }
.row .cell { display: flex; align-items: center; width: max-content; }
.row .sep { width: 1px; height: 24px; background: #e3e4e8; }
.row .mut { color: #7381a0; }
.row .faint { color: #97a0b5; }
.row .slate { color: #6d768a; }
.row .off { color: #b9bbc0; }
.row .on { background: #dbe0e6; justify-content: center; width: 24px; height: 25px; }
.row .num { width: 29px; padding-right: 5px; box-sizing: content-box; justify-content: flex-start; }
.row .num .ic { margin-left: 5px; }
.row .home { height: 21px; padding: 0 10.5px; border-radius: 11px; background: #4a90f4; color: #fff; font-weight: 700; }
.row .blue { color: #5a96f5; }
.row .find { color: #8790a8; font-size: 13px; }
.row .bold { font: 700 19px "Noto Sans", sans-serif; color: #2b3345; }
.row .ital { font: italic 19px "Liberation Serif", serif; }
.row .aa { font-size: 15px; color: #666c78; }
.row .signin { height: 25px; width: 71px; border-radius: 13px; background: #f5a50f; color: #fff5df; gap: 4px; padding-left: 1.5px; box-sizing: border-box; }
.row .premium { height: 21px; width: 102px; border-radius: 11px; background: #cbcbcc; color: #6e6e70; gap: 4px; padding-left: 7px; box-sizing: border-box; }
.row .temp { font-size: 14px; }
</style>

<style scoped>
.page { position: relative; width: 1920px; height: 972px; overflow: hidden; background: #f6f8fa; font: 12px/15px "Noto Sans", "Open Sans", sans-serif; color: #4a5062; }
.page span, .page b, .page em, .page i { white-space: nowrap; }
.topbar { height: 44px; background: #161b22; border-bottom: 1px solid #343b42; display: flex; align-items: flex-start; overflow: hidden; }
.file { font: 26px/30px "DejaVu Sans Mono", monospace; color: #e2e8ee; margin: -17px 0 0 -5px; }
.copyico { margin-left: 18px; fill: none; stroke: #8b949e; stroke-width: 3; }
.shot { position: relative; width: 1422px; height: 801px; margin: 72px 0 0 346px; box-sizing: border-box; padding: 3px 4px 4px; background: #dce2e8; }
.office { width: 1414.5px; height: 794px; display: flex; flex-direction: column; overflow: hidden; background: #fff; }

.tabs { height: 32px; flex: none; display: flex; background: #e2e3e7; padding-top: 0; }
.wps { width: 111px; margin-right: 3px; padding: 1px 3px 0 0; box-sizing: border-box; background: #628efb; color: #e6edff; display: flex; align-items: center; justify-content: center; }
.tab { display: flex; align-items: center; box-sizing: border-box; padding-top: 1px; }
.tab .ic:last-child { margin-left: 9px; }
.current { width: 259px; background: #fff; padding-left: 10px; color: #42454e; }
.tab span { width: 171px; margin-left: 4.5px; }
.current .ic, .other .ic { color: #bcc3d3; }
.current .mon { margin-left: 12px; }
.other { width: 262px; background: #d6d7db; padding-left: 12.5px; color: #6b6f7a; }
.other span { width: 128px; }
.other .mon { margin-left: 56px; }
.add { width: 38px; display: flex; align-items: center; padding-left: 11.5px; box-sizing: border-box; color: #4b556c; }

.menubar { height: 39px; flex: none; }
.ribbon { height: 69px; flex: none; display: flex; }
.group { display: flex; box-sizing: border-box; border-right: 1px solid #e9eaed; height: 68px; }
.clip { width: 172px; }
.big { display: flex; flex-direction: column; align-items: center; }
.big > .ic { margin-top: 5px; height: 26px; }
.cap { display: flex; align-items: center; gap: 5px; margin-top: 4px; color: #3d4558; }
.cap .ic { color: #6b7894; margin-bottom: 5px; }
.cap.two { flex-direction: column; align-items: flex-start; gap: 0; margin-top: 3px; line-height: 14px; }
.cap.two span span { display: inline-block; }
.cap.two span .ic { display: inline-block; margin: 0 0 5px 4px; }
.paste { width: 61px; padding-left: 3px; box-sizing: border-box; }
.paste > .ic { margin-left: 2px; }
.cc { width: 56px; color: #b0b3ba; display: flex; flex-direction: column; gap: 10px; padding-top: 6px; }
.cc div { display: flex; align-items: center; gap: 4px; height: 17px; }
.cc .ic { width: 18px; }
.format { width: 43px; }
.fonts { width: 324px; flex-direction: column; padding-top: .5px; }
.line { display: flex; height: 25px; flex: none; }
.line + .line { margin-top: 1.5px; }
.combo { display: flex; align-items: center; justify-content: space-between; box-sizing: border-box; border: 1px solid #dfe1e5; height: 24px; padding: 1px 2px 0; color: #555b68; }
.combo .ic { color: #6b7894; }
.family { width: 120px; margin-left: 5.5px; }
.size { width: 78px; border-left: 0; padding: 1px 3px 0 2px; }
.para { width: 264.5px; flex-direction: column; padding-top: .5px; }
.styles { width: 298px; padding: 2px 0 0 5px; }
.gallery { display: flex; width: 286px; height: 51px; border: 1px solid #e2e3e6; box-sizing: border-box; }
.style { width: 67px; display: flex; flex-direction: column; align-items: center; color: #4f5666; }
.style b, .style em, .style i { height: 31px; line-height: 37px; font-style: normal; color: #111; }
.style b { font: 700 20px/35px "Liberation Serif", serif; margin-left: -2px; }
.style em { font: 18px/34px "Liberation Serif", serif; color: #333; }
.style i { color: #555; font-size: 11.5px; line-height: 33px; margin-left: -3px; }
.style span { margin-left: -2px; }
.h4 { width: 68px; }
.picked { box-sizing: border-box; width: 66px; border: 1.5px solid #dedfe4; margin-top: 1px; height: 52px; }
.picked em { height: 29px; line-height: 32px; }
.spin { margin-left: auto; width: 14px; border-left: 1px solid #e2e3e6; display: flex; flex-direction: column; color: #6b7894; }
.spin span { flex: 1; display: flex; align-items: center; justify-content: center; border-bottom: 1px solid #e7e8eb; margin: 0; }
.typeset { width: 125px; padding-left: 1px; }
.edit { width: 124px; padding-left: 12px; }
.findrep { width: 48px; }
.select { width: 62px; padding-left: 1px; }
.set { width: 75.5px; }
.next { display: flex; flex: 1; align-items: center; justify-content: flex-end; height: 68px; gap: 1px; color: #3d4558; }
.next span { margin-top: 16px; width: 6px; }
.next div { width: 13px; height: 66px; background: #c8c9cf; display: flex; align-items: center; justify-content: center; }

.work { flex: 1; display: flex; min-height: 0; background: #f6f7f9; box-shadow: inset 0 3px 4px -2px #d5d7da; }
.canvas { width: 1084px; padding-left: 132px; box-sizing: border-box; overflow: hidden; }
.sheet { width: 822px; height: 100%; background: #fff; box-shadow: 0 0 16px 1px #b9babd; display: flex; flex-direction: column; clip-path: inset(0 -30px); }
.tag { display: flex; align-items: center; gap: 7px; margin: 520px 0 0 30px; color: #b0b3ba; }
.tails { margin: 20px 0 0 92px; fill: none; stroke: #222; stroke-width: 1.5; }
.red { stroke: #e33; }
.para31 { display: flex; margin: 5px 0 0 99px; font: 17px/20px "Liberation Serif", serif; color: #151515; }
.para31 span:first-child { width: 29px; }
.para31 span:nth-child(2) { width: 384px; }
.wavy { font-size: 18px; text-decoration: underline wavy #e33 1px; text-underline-offset: 1px; }
.wavy sup { font-size: 12px; line-height: 0; }
.vscroll { width: 15px; background: #e9eaf0; color: #98a1bb; display: flex; flex-direction: column; align-items: center; }
.vtop { width: 100%; height: 19px; background: #f6f7f9; display: flex; align-items: center; justify-content: center; }
.s1 { margin-top: 8px; }
.vthumb { width: 13px; height: 108px; margin: 247px 0 127px; border-radius: 7px; background: #d5d8e0; flex: none; }
.vscroll .s2 ~ .ic { margin-top: 12px; }
.pane { width: 270.5px; box-sizing: border-box; border-right: 1px solid #e1e4e9; display: flex; flex-direction: column; color: #5a6274; }
.phead { display: flex; align-items: center; padding: 9px 9px 0 10px; }
.phead > .ic { margin-left: 5px; }
.phead .pin { margin-left: auto; margin-right: 7px; }
.speck { width: 3px; height: 1px; margin: 4px 0 0 134px; background: #888; }
.pfoot { margin: auto 4px 0 5px; border-top: 1.5px solid #b2b4b7; height: 26px; line-height: 31px; color: #4b78cb; box-sizing: border-box; }
.side { flex: 1; display: flex; flex-direction: column; align-items: center; color: #5c6476; }
.handle { width: 21px; height: 3px; margin: 11px 0 10.4px; border: solid #d7d9dc; border-width: 1px 0; }
.tool { width: 33px; height: 33px; margin: 2.14px 0; display: flex; align-items: center; justify-content: center; flex: none; padding-right: 1px; box-sizing: border-box; }
.xmlpen { background: #dae0e7; border-radius: 2px; }
.sliders { color: #a0a6b4; }
.grid4 { margin: auto 0 0; width: 39px; height: 44px; border-top: 1px solid #e1e3e7; display: flex; align-items: center; justify-content: center; color: #b8bbc2; box-sizing: border-box; padding: 6px 2px 0 0; }

.status { height: 30px; flex: none; border-top: 1px solid #e1e3e7; background: #f5f6f8; box-sizing: border-box; padding-top: 1px; }
.status :deep(.sep) { height: 15px; }
.taskbar { height: 41px; flex: none; display: flex; background: linear-gradient(90deg, #293639, #20282b 50%, #25323a); color: #eceeef; }
.start { width: 50px; display: flex; align-items: center; justify-content: center; }
.searchbox { width: 299px; background: #323232; border: 1px solid #474d4e; border-width: 1px 1px 0; box-sizing: border-box; display: flex; align-items: center; padding-left: 11px; color: #c6c6c6; font-size: 14.5px; }
.searchbox span { margin-left: 11.5px; }
.art { margin: auto 0 0 auto; }
.app { width: 50.8px; display: flex; align-items: center; justify-content: center; }
.run { background: linear-gradient(#78cad4, #78cad4) center bottom / 41px 2px no-repeat; }
.active { background: linear-gradient(#78cad4, #78cad4) center bottom / 100% 2px no-repeat #505b5e; }
.clock { width: 60px; margin-left: auto; display: flex; flex-direction: column; align-items: center; justify-content: center; line-height: 18px; }
.note { width: 53px; margin-left: 5px; padding-left: 14px; margin-right: 4px; box-sizing: border-box; display: flex; align-items: center; border-right: 1px solid #68757a; }

.sim { position: absolute; left: 212px; top: 125px; width: 803px; height: 577px; box-sizing: border-box; border: 1px solid #777b80; background: #ececec; box-shadow: 1px 5px 16px 1px rgba(0, 0, 0, .42); display: flex; flex-direction: column; }
.chromebar { height: 93px; flex: none; background: linear-gradient(#fff 22%, #d9d9d9); }
.title { height: 29px; display: flex; align-items: center; padding-left: 7.5px; color: #222; }
.title span { margin-left: 5px; width: 119px; }
.m { margin-left: 528.5px; }
.q { margin-left: 35px; }
.k { margin-left: 35.5px; }
.simmenu { height: 27px; display: flex; align-items: center; gap: 12px; padding: 0 0 0 5px; box-sizing: border-box; font: 700 12px "Liberation Sans", sans-serif; color: #484848; }
.toolbar { display: flex; height: 33px; }
.grip { width: 11px; height: 33px; margin: 0 4.5px 0 1px; background: repeating-conic-gradient(#c4c6c9 0 25%, #f0f0f0 0 50%) 0 0 / 4px 4px; }
.btn { width: 32px; height: 32px; box-sizing: border-box; border: 1px solid #a9abae; background: #eee; margin-right: 1px; }
.btn svg { display: block; }
.down { background: #808080; border: 1px solid #999; }
.play { margin-left: 10px; background: linear-gradient(#dde8f3, #fafcfe 30%, #b9cfe4); border-color: #8496ab; }
.graph { display: block; margin: 0 0 0 1px; background: #fff; outline: 1px solid #8b9bab; flex: none; }
.edge { fill: none; stroke: #0a0af5; stroke-width: 2.8; }
.node { fill: #f00; stroke: #000; stroke-width: 2.8; }
.ring { fill: #fff; }
.ok { fill: #0f0; }
.graph text { font: 12px "Liberation Sans", sans-serif; text-anchor: middle; fill: #222; }
.tape { display: flex; height: 42px; margin-top: 1px; overflow: hidden; background: #858585; padding: 2px 0 2px 1.5px; box-sizing: border-box; flex: none; }
.sq { width: 38.83px; margin-right: 2.5px; flex: none; background: #fff; display: flex; align-items: center; justify-content: center; padding-top: 3px; box-sizing: border-box; font: 13px "Liberation Sans", sans-serif; color: #222; }
.head { background: conic-gradient(from -42deg at 50% 100%, #0f0 84deg, transparent 0) center 2px / 18px 10px no-repeat #000; }
.hscroll { flex: 1; display: flex; border-top: 1px solid #8ba3bf; color: #111; }
.hscroll span { width: 15px; display: flex; align-items: center; justify-content: center; }
.hscroll div { flex: 1; border: solid #7f9fc0; border-width: 0 1px; background: #eee; }
.flip { transform: scaleX(-1); }

.scrollbar { position: absolute; right: 0; top: 0; width: 21px; height: 970px; background: #424242; display: flex; flex-direction: column; align-items: center; }
.thumb { width: 17px; height: 74px; margin-top: 413px; background: #686868; }
.arrow { margin: auto 0 8px; border: solid transparent; border-width: 5px 5px 0; border-top-color: #fff; }
.baseline { position: absolute; left: 0; bottom: 0; width: 100%; height: 2px; background: #1e2024; }
</style>
